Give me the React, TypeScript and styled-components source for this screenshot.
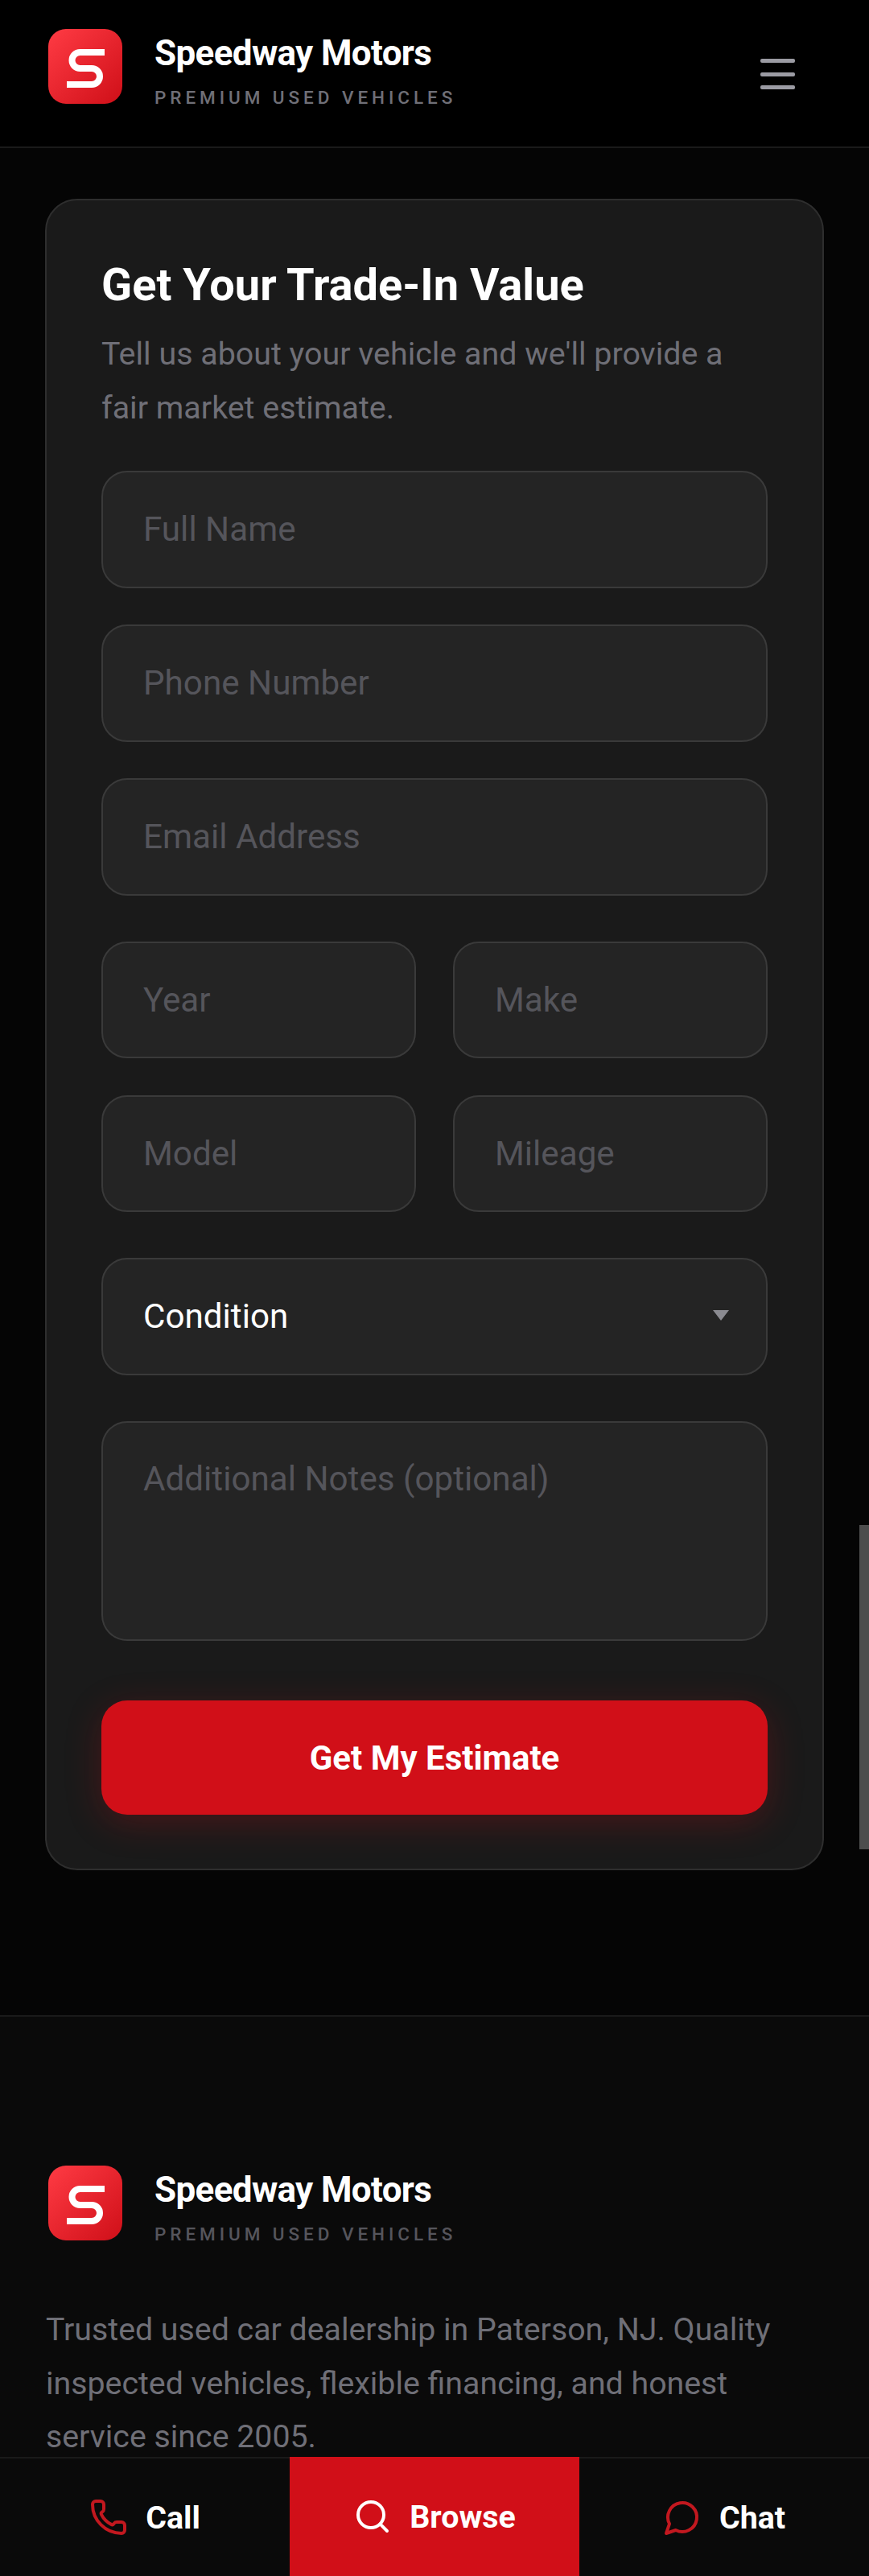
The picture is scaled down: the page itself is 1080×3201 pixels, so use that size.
import React from "react";
import styled, { createGlobalStyle } from "styled-components";

const Global = createGlobalStyle`
  * { box-sizing: border-box; }
  html, body { margin: 0; height: 3201px; overflow: hidden; background: #050505; }
  html { scrollbar-width: none; }
  body { font-family: Roboto, "Liberation Sans", sans-serif; color: #fff; }
`;
const Page = styled.div`width: 1080px;`;
const Header = styled.header`
  height: 184px; background: #000; border-bottom: 2px solid #1a1a1a;
  padding: 36px 92px 0 60px; display: flex; justify-content: space-between; align-items: flex-start;
`;
const Brand = styled.div`display: flex; gap: 40px; align-items: flex-start;`;
const LogoBox = styled.div`
  width: 92px; height: 93px; border-radius: 22px; background: linear-gradient(135deg, #ff3b44, #cf0f18);
  display: flex; flex: none;
`;
const BrandText = styled.div`display: flex; flex-direction: column;`;
const BrandName = styled.div`
  font-size: 44px; font-weight: 700; letter-spacing: -0.65px; line-height: 56px; color: #fff; margin-top: 2px;
`;
const BrandTag = styled.div<{ $dim?: boolean }>`
  font-size: 22.5px; font-weight: 500; letter-spacing: 4.95px; line-height: 26px; margin-top: 14px;
  color: ${p => (p.$dim ? "#55555c" : "#6f6f77")}; white-space: nowrap;
`;
const Burger = styled.div`
  width: 43px; margin-top: 37px; display: flex; flex-direction: column; gap: 11.5px;
`;
const BurgerBar = styled.span`display: block; height: 5px; border-radius: 2px; background: #9b9ba3;`;
const Main = styled.main`padding: 63px 56px 180px; background: #050505;`;
const Card = styled.section`
  height: 2077px; background: #1a1a1a; border: 2px solid #2e2e2e; border-radius: 40px; padding: 72px 68px 0;
  display: flex; flex-direction: column;
`;
const Title = styled.h2`
  margin: 0; font-size: 56px; font-weight: 700; line-height: 66px; color: #fff; letter-spacing: 0;
`;
const Lead = styled.p`
  margin: 20px 0 0; font-size: 39.4px; line-height: 66.5px; color: #6f6f77;
`;
const Form = styled.form`display: flex; flex-direction: column; gap: 57px; margin-top: 45px;`;
const Stack = styled.div`display: flex; flex-direction: column; gap: 45.5px;`;
const Pair = styled.div`display: grid; grid-template-columns: 1fr 1fr; gap: 46px;`;
const fieldCss = `
  display: block; width: 100%; background: #242424; border: 2px solid #3a3a3a; border-radius: 32px;
  font-family: Roboto, "Liberation Sans", sans-serif; font-size: 42.2px; color: #fff; padding: 0 50px; outline: none;
  &::placeholder { color: #55555b; opacity: 1; }
`;
const Input = styled.input`${fieldCss} height: 145.5px;`;
const SelectWrap = styled.div`
  position: relative;
  &::after {
    content: ""; position: absolute; right: 48px; top: 65px; border-style: solid;
    border-width: 13px 10px 0; border-color: #8a8a90 transparent transparent;
  }
`;
const Select = styled.select`${fieldCss} height: 145.5px; appearance: none;`;
const TextArea = styled.textarea`${fieldCss} height: 273px; padding-top: 46px; resize: none; display: block; line-height: 47px;`;
const Submit = styled.button`
  margin-top: 17.5px; height: 142px; width: 100%; border: 0; border-radius: 32px; background: #d10f18; color: #fff;
  font-family: Roboto, "Liberation Sans", sans-serif; font-size: 42px; font-weight: 700;
  box-shadow: 0 10px 44px rgba(209, 15, 24, 0.25);
`;
const Footer = styled.footer`
  background: #0a0a0a; border-top: 2px solid #1a1a1a; padding: 185px 57px 200px; 
`;
const FooterBrand = styled.div`display: flex; gap: 40px; padding-left: 3px; margin-bottom: 73px;`;
const FooterText = styled.p`margin: 0; font-size: 39.3px; line-height: 66.6px; color: #6f6f77;`;
const Nav = styled.nav`
  position: fixed; left: 0; right: 0; bottom: 0; height: 148px; background: #0a0a0a; border-top: 2px solid #1a1a1a;
  display: grid; grid-template-columns: repeat(3, 360px);
`;
const NavItem = styled.a<{ $active?: boolean }>`
  display: flex; align-items: center; justify-content: center; gap: 22px; font-size: 39.4px; font-weight: 700; color: #fff;
  background: ${p => (p.$active ? "#d10f18" : "transparent")};
  margin-top: ${p => (p.$active ? "-2px" : "0")};
`;
const Thumb = styled.div`
  position: fixed; right: 0; top: 1895px; width: 12px; height: 403px; background: #4d4d4d;
`;

const Logo = () => (
  <LogoBox>
    <svg width="92" height="93" viewBox="0 0 92 93" fill="none">
      <path d="M70 29H39.5a10 10 0 0 0 0 20H54a10 10 0 0 1 0 20H23" stroke="#fff" strokeWidth="8" />
    </svg>
  </LogoBox>
);
const Icon = ({ children, color }: { children: React.ReactNode; color: string }) => (
  <svg width="48" height="48" viewBox="0 0 24 24" fill="none" stroke={color} strokeWidth="2" strokeLinecap="round" strokeLinejoin="round">
    {children}
  </svg>
);

export default function App() {
  return (
    <Page>
      <Global />
      <Header>
        <Brand>
          <Logo />
          <BrandText>
            <BrandName>Speedway Motors</BrandName>
            <BrandTag>PREMIUM USED VEHICLES</BrandTag>
          </BrandText>
        </Brand>
        <Burger><BurgerBar /><BurgerBar /><BurgerBar /></Burger>
      </Header>
      <Main>
        <Card>
          <Title>Get Your Trade-In Value</Title>
          <Lead>Tell us about your vehicle and we'll provide a fair market estimate.</Lead>
          <Form>
            <Stack>
              <Input placeholder="Full Name" />
              <Input placeholder="Phone Number" />
              <Input placeholder="Email Address" />
            </Stack>
            <Stack>
              <Pair><Input placeholder="Year" /><Input placeholder="Make" /></Pair>
              <Pair><Input placeholder="Model" /><Input placeholder="Mileage" /></Pair>
            </Stack>
            <SelectWrap>
              <Select defaultValue="c"><option value="c">Condition</option></Select>
            </SelectWrap>
            <TextArea placeholder="Additional Notes (optional)" />
            <Submit type="button">Get My Estimate</Submit>
          </Form>
        </Card>
      </Main>
      <Footer>
        <FooterBrand>
          <Logo />
          <BrandText>
            <BrandName>Speedway Motors</BrandName>
            <BrandTag $dim>PREMIUM USED VEHICLES</BrandTag>
          </BrandText>
        </FooterBrand>
        <FooterText>Trusted used car dealership in Paterson, NJ. Quality inspected vehicles, flexible financing, and honest service since 2005.</FooterText>
      </Footer>
      <Nav>
        <NavItem>
          <Icon color="#c2181f"><path d="M13.832 16.568a1 1 0 0 0 1.213-.303l.355-.465A2 2 0 0 1 17 15h3a2 2 0 0 1 2 2v3a2 2 0 0 1-2 2A18 18 0 0 1 2 4a2 2 0 0 1 2-2h3a2 2 0 0 1 2 2v3a2 2 0 0 1-.8 1.6l-.468.351a1 1 0 0 0-.292 1.233 14 14 0 0 0 6.392 6.384" /></Icon>
          Call
        </NavItem>
        <NavItem $active>
          <Icon color="#fff"><circle cx="11" cy="11" r="8" /><path d="m21 21-4.3-4.3" /></Icon>
          Browse
        </NavItem>
        <NavItem>
          <Icon color="#c2181f"><path d="M7.9 20A9 9 0 1 0 4 16.1L2 22Z" /></Icon>
          Chat
        </NavItem>
      </Nav>
      <Thumb />
    </Page>
  );
}
